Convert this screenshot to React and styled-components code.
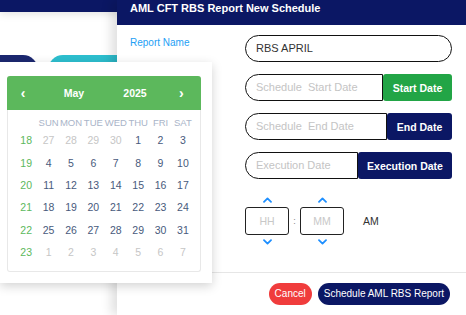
import React from 'react';
import styled, { createGlobalStyle } from 'styled-components';

const GlobalStyle = createGlobalStyle`
  html, body {
    margin: 0;
    padding: 0;
    background: #fff;
    font-family: 'Liberation Sans', Arial, sans-serif;
    overflow: hidden;
  }
  * { box-sizing: border-box; }
`;

const NAVY = '#0b1764';

const Page = styled.div`
  position: relative;
  width: 466px;
  height: 315px;
  overflow: hidden;
  background: #fff;
`;

const TopBar = styled.div`
  height: 12px;
  background: ${NAVY};
  box-shadow: 0 2px 8px rgba(0, 0, 0, 0.12);
`;

const PillRow = styled.div`
  display: flex;
  gap: 10px;
  margin: 43px 0 0 -20px;
`;

const Pill = styled.div`
  width: ${(p) => p.width}px;
  height: 30px;
  border-radius: 15px;
  background: ${(p) => p.bg};
`;

const Modal = styled.div`
  position: absolute;
  top: 0;
  right: 0;
  width: 349px;
  height: 315px;
  background: #fff;
  box-shadow: -6px 0 10px rgba(0, 0, 0, 0.12);
  display: flex;
  flex-direction: column;
`;

const ModalHeader = styled.div`
  height: 25px;
  background: ${NAVY};
  color: #fff;
  font-weight: bold;
  font-size: 11px;
  line-height: 13px;
  padding: 2px 0 0 13px;
`;

const ModalBody = styled.div`
  flex: 1;
  display: grid;
  grid-template-columns: 115px 207px;
  row-gap: 12px;
  align-content: start;
  padding: 10px 14px 0 13px;
`;

const Label = styled.div`
  color: #1ea0f5;
  font-size: 10px;
  padding-top: 2px;
`;

const Field = styled.div`
  grid-column: 2;
  display: flex;
  height: 27px;
`;

const TextInput = styled.div`
  flex: 1;
  border: 1px solid #111;
  border-radius: ${(p) => (p.pill ? '14px' : '14px 0 0 14px')};
  font-size: 11px;
  line-height: 25px;
  padding-left: 10px;
  color: ${(p) => (p.placeholder ? '#c4c4c4' : '#333')};
  white-space: pre;
`;

const DateButton = styled.div`
  width: ${(p) => p.width}px;
  background: ${(p) => p.bg};
  color: #fff;
  font-weight: bold;
  font-size: 10.5px;
  display: flex;
  align-items: center;
  justify-content: center;
  border-radius: 3px;
`;

const TimeRow = styled.div`
  grid-column: 2;
  display: flex;
  align-items: center;
  margin-top: 6px;
`;

const Spinner = styled.div`
  display: flex;
  flex-direction: column;
  align-items: center;
  gap: 4px;
`;

const TimeBox = styled.div`
  width: 44px;
  height: 28px;
  border: 1.5px solid #222;
  border-radius: 3px;
  display: flex;
  align-items: center;
  justify-content: center;
  font-size: 10.5px;
  color: #c8c8c8;
`;

const Colon = styled.span`
  width: 11px;
  text-align: center;
  font-size: 9px;
  color: #888;
`;

const Meridiem = styled.span`
  margin-left: 19px;
  font-size: 10.5px;
  color: #333;
`;

const Footer = styled.div`
  border-top: 1px solid #e6e6e6;
  height: 43px;
  display: flex;
  justify-content: flex-end;
  align-items: center;
  gap: 6px;
  padding: 0 16px 1px 0;
`;

const FooterButton = styled.div`
  height: 22px;
  padding: 0 ${(p) => p.pad}px;
  border-radius: 11px;
  background: ${(p) => p.bg};
  color: #fff;
  font-size: 10px;
  display: flex;
  align-items: center;
`;

const Popup = styled.div`
  position: absolute;
  left: 0;
  top: 62px;
  width: 212px;
  height: 221px;
  background: #fff;
  box-shadow: 0 3px 10px rgba(0, 0, 0, 0.18);
  padding: 14px 11px 0 7px;
`;

const Calendar = styled.div`
  border: 1px solid #e8e8e8;
  border-top: none;
  border-radius: 3px;
  height: 196px;
`;

const CalHeader = styled.div`
  height: 34px;
  background: #5cb85c;
  border-radius: 3px 3px 0 0;
  display: grid;
  grid-template-columns: 32px 70px 52px 1fr 22px;
  align-items: center;
  color: #fff;
  font-weight: bold;
  font-size: 10.5px;
  margin: 0 -1px;
`;

const HeadCell = styled.span`
  text-align: ${(p) => p.align || 'center'};
  font-size: ${(p) => p.size || 10.5}px;
`;

const Grid = styled.div`
  display: grid;
  grid-template-columns: repeat(8, 22.4px);
  grid-template-rows: 19px repeat(6, 22.4px);
  padding: 0 7px;
`;

const NameCell = styled.div`
  padding-top: 7px;
  text-align: center;
  font-size: 9.5px;
  color: #a9b4c8;
  white-space: nowrap;
`;

const DayCell = styled.div`
  display: flex;
  align-items: center;
  justify-content: center;
  font-size: 10.5px;
  color: ${(p) => (p.week ? '#5cb85c' : p.muted ? '#c6c6c6' : '#485a7c')};
`;

const Chevron = ({ down }) => (
  <svg width="9" height="6" viewBox="0 0 9 6">
    <path
      d={down ? 'M1 1.2 L4.5 4.6 L8 1.2' : 'M1 4.8 L4.5 1.4 L8 4.8'}
      fill="none"
      stroke="#1e8fff"
      strokeWidth="1.8"
      strokeLinecap="round"
      strokeLinejoin="round"
    />
  </svg>
);

const names = ['', 'SUN', 'MON', 'TUE', 'WED', 'THU', 'FRI', 'SAT'];

const weeks = [
  [18, [[27, 1], [28, 1], [29, 1], [30, 1], [1], [2], [3]]],
  [19, [[4], [5], [6], [7], [8], [9], [10]]],
  [20, [[11], [12], [13], [14], [15], [16], [17]]],
  [21, [[18], [19], [20], [21], [22], [23], [24]]],
  [22, [[25], [26], [27], [28], [29], [30], [31]]],
  [23, [[1, 1], [2, 1], [3, 1], [4, 1], [5, 1], [6, 1], [7, 1]]],
];

const dateRows = [
  { placeholder: 'Schedule  Start Date', label: 'Start Date', width: 69, bg: '#22a546' },
  { placeholder: 'Schedule  End Date', label: 'End Date', width: 65, bg: NAVY },
  { placeholder: 'Execution Date', label: 'Execution Date', width: 94, bg: NAVY },
];

export default function App() {
  return (
    <Page>
      <GlobalStyle />
      <TopBar />
      <PillRow>
        <Pill width={58} bg="#1c2870" />
        <Pill width={110} bg="#2dbfcf" />
      </PillRow>

      <Modal>
        <ModalHeader>AML CFT RBS Report New Schedule</ModalHeader>
        <ModalBody>
          <Label>Report Name</Label>
          <Field>
            <TextInput pill>RBS APRIL</TextInput>
          </Field>
          {dateRows.map((row) => (
            <Field key={row.label}>
              <TextInput placeholder>{row.placeholder}</TextInput>
              <DateButton width={row.width} bg={row.bg}>
                {row.label}
              </DateButton>
            </Field>
          ))}
          <TimeRow>
            <Spinner>
              <Chevron />
              <TimeBox>HH</TimeBox>
              <Chevron down />
            </Spinner>
            <Colon>:</Colon>
            <Spinner>
              <Chevron />
              <TimeBox>MM</TimeBox>
              <Chevron down />
            </Spinner>
            <Meridiem>AM</Meridiem>
          </TimeRow>
        </ModalBody>
        <Footer>
          <FooterButton pad={6} bg="#f03c3c">Cancel</FooterButton>
          <FooterButton pad={6} bg={NAVY}>Schedule AML RBS Report</FooterButton>
        </Footer>
      </Modal>

      <Popup>
        <Calendar>
          <CalHeader>
            <HeadCell size={14}>‹</HeadCell>
            <HeadCell>May</HeadCell>
            <HeadCell>2025</HeadCell>
            <span />
            <HeadCell size={14} align="left">›</HeadCell>
          </CalHeader>
          <Grid>
            {names.map((n, i) => (
              <NameCell key={i}>{n}</NameCell>
            ))}
            {weeks.map(([wk, days]) => (
              <React.Fragment key={wk}>
                <DayCell week>{wk}</DayCell>
                {days.map(([d, muted], i) => (
                  <DayCell key={i} muted={muted}>
                    {d}
                  </DayCell>
                ))}
              </React.Fragment>
            ))}
          </Grid>
        </Calendar>
      </Popup>
    </Page>
  );
}
